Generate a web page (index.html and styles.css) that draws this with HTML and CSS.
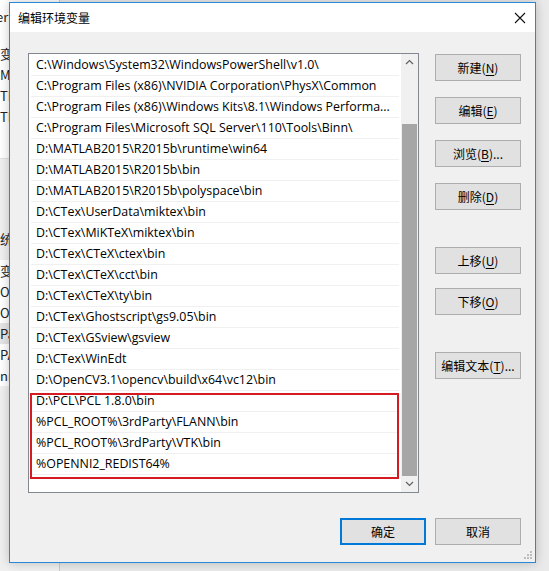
FILE: index.html
```html
<!DOCTYPE html>
<html lang="zh-CN">
<head>
<meta charset="utf-8">
<title>编辑环境变量</title>
<link rel="stylesheet" href="styles.css">
</head>
<body>
<div class="desktop">
  <div class="bgwin">
    <div class="bg-head">er</div>
    <div class="bg-list">
      <div class="bg-row">变</div>
      <div class="bg-row">M</div>
      <div class="bg-row">TE</div>
      <div class="bg-row">TM</div>
    </div>
    <div class="bg-gap"></div>
    <div class="bg-label">统</div>
    <div class="bg-list2">
      <div class="bg-row">变</div>
      <div class="bg-row">O</div>
      <div class="bg-row">O</div>
      <div class="bg-row sel">Pa</div>
      <div class="bg-row">PA</div>
      <div class="bg-row">nr</div>
    </div>
  </div>

  <div class="dialog">
    <div class="titlebar">
      <span class="title">编辑环境变量</span>
      <svg class="close" width="12" height="12" viewBox="0 0 12 12"><path d="M1 1L11 11M11 1L1 11" stroke="#111" stroke-width="1.1" fill="none"/></svg>
    </div>
    <div class="body">
      <div class="main">
        <div class="listbox">
          <div class="items">
            <div class="row">C:\Windows\System32\WindowsPowerShell\v1.0\</div>
            <div class="row">C:\Program Files (x86)\NVIDIA Corporation\PhysX\Common</div>
            <div class="row">C:\Program Files (x86)\Windows Kits\8.1\Windows Performa...</div>
            <div class="row">C:\Program Files\Microsoft SQL Server\110\Tools\Binn\</div>
            <div class="row">D:\MATLAB2015\R2015b\runtime\win64</div>
            <div class="row">D:\MATLAB2015\R2015b\bin</div>
            <div class="row">D:\MATLAB2015\R2015b\polyspace\bin</div>
            <div class="row">D:\CTex\UserData\miktex\bin</div>
            <div class="row">D:\CTex\MiKTeX\miktex\bin</div>
            <div class="row">D:\CTex\CTeX\ctex\bin</div>
            <div class="row">D:\CTex\CTeX\cct\bin</div>
            <div class="row">D:\CTex\CTeX\ty\bin</div>
            <div class="row">D:\CTex\Ghostscript\gs9.05\bin</div>
            <div class="row">D:\CTex\GSview\gsview</div>
            <div class="row">D:\CTex\WinEdt</div>
            <div class="row">D:\OpenCV3.1\opencv\build\x64\vc12\bin</div>
            <div class="row">D:\PCL\PCL 1.8.0\bin</div>
            <div class="row">%PCL_ROOT%\3rdParty\FLANN\bin</div>
            <div class="row">%PCL_ROOT%\3rdParty\VTK\bin</div>
            <div class="row">%OPENNI2_REDIST64%</div>
          </div>
          <div class="scrollbar">
            <div class="arrow">
              <svg width="9" height="6" viewBox="0 0 9 6"><path d="M1 5L4.5 1.5L8 5" stroke="#606060" stroke-width="1.2" fill="none"/></svg>
            </div>
            <div class="track"><div class="thumb"></div></div>
            <div class="arrow">
              <svg width="9" height="6" viewBox="0 0 9 6"><path d="M1 1L4.5 4.5L8 1" stroke="#606060" stroke-width="1.2" fill="none"/></svg>
            </div>
          </div>
          <div class="mark"></div>
        </div>
        <div class="btncol">
          <button class="btn">新建(<u>N</u>)</button>
          <button class="btn">编辑(<u>E</u>)</button>
          <button class="btn">浏览(<u>B</u>)...</button>
          <button class="btn">删除(<u>D</u>)</button>
          <button class="btn gap-big">上移(<u>U</u>)</button>
          <button class="btn gap-small">下移(<u>O</u>)</button>
          <button class="btn gap-big">编辑文本(<u>T</u>)...</button>
        </div>
      </div>
      <div class="footer">
        <button class="btn default">确定</button>
        <button class="btn">取消</button>
      </div>
    </div>
    <svg class="grip" width="10" height="10" viewBox="0 0 10 10">
      <rect x="7" y="1" width="2" height="2" fill="#bdbdbd"/>
      <rect x="4" y="4" width="2" height="2" fill="#bdbdbd"/>
      <rect x="7" y="4" width="2" height="2" fill="#bdbdbd"/>
      <rect x="1" y="7" width="2" height="2" fill="#bdbdbd"/>
      <rect x="4" y="7" width="2" height="2" fill="#bdbdbd"/>
      <rect x="7" y="7" width="2" height="2" fill="#bdbdbd"/>
    </svg>
  </div>
</div>
</body>
</html>
```
FILE: styles.css
```css
* { box-sizing: border-box; }
html, body { margin: 0; padding: 0; }
body {
  font-family: "Open Sans", "Noto Sans CJK SC", sans-serif;
  font-size: 12px;
  color: #000;
}
.desktop {
  position: relative;
  width: 549px;
  height: 571px;
  background: #eaeaea;
  overflow: hidden;
}

/* background window, partially hidden */
.bgwin {
  position: absolute;
  left: 0;
  top: 0;
  width: 60px;
  height: 571px;
  background: #f0f0f0;
  border-right: 1px solid #ccc;
  font-family: "Noto Sans CJK SC", sans-serif;
  font-size: 13px;
  color: #222;
}
.bg-head {
  height: 33px;
  background: #fff;
  line-height: 33px;
  margin-left: -4px;
}
.bg-list {
  padding-top: 10px;
  background: #fff;
  height: 125px;
}
.bg-row { height: 21px; line-height: 21px; }
.bg-gap { height: 70px; border-top: 1px solid #e0e0e0; }
.bg-label { height: 32px; line-height: 22px; }
.bg-list2 { background: #fff; }
.bg-row.sel { background: #e5e5e5; }

/* dialog */
.dialog {
  position: absolute;
  left: 9px;
  top: 2px;
  width: 527px;
  height: 561px;
  border: 1px solid #2a87d8;
  background: #f0f0f0;
  box-shadow: 0 0 10px rgba(0, 0, 0, 0.22);
  display: flex;
  flex-direction: column;
}
.titlebar {
  height: 29px;
  background: #fff;
  display: flex;
  align-items: center;
  justify-content: space-between;
  padding: 0 9px 0 8px;
  flex: none;
}
.title {
  font-family: "Noto Sans CJK SC", sans-serif;
  font-size: 12px;
  color: #000;
}
.close { display: block; }

.body {
  padding: 21px 14px 0 18px;
  display: flex;
  flex-direction: column;
}
.main {
  display: flex;
  gap: 16px;
}
.listbox {
  position: relative;
  width: 391px;
  height: 440px;
  background: #fff;
  border: 1px solid #828790;
  display: flex;
  padding-top: 1px;
}
.items {
  flex: 1;
  padding: 0 2px;
  min-width: 0;
}
.row {
  height: 21px;
  line-height: 20px;
  padding-left: 5px;
  border-bottom: 1px solid #f0f0f0;
  white-space: nowrap;
  overflow: hidden;
  color: #000;
  font-size: 12.4px;
}
.scrollbar {
  width: 17px;
  flex: none;
  margin-top: -1px;
  background: #f0f0f0;
  display: flex;
  flex-direction: column;
}
.arrow {
  height: 17px;
  display: flex;
  align-items: center;
  justify-content: center;
}
.arrow svg { display: block; }
.track {
  flex: 1;
  padding: 53px 1px 0 1px;
}
.thumb {
  height: 352px;
  background: #a6a6a6;
}
.mark {
  position: absolute;
  left: 1px;
  top: 339px;
  width: 369px;
  height: 86px;
  border: 2px solid #d61a22;
}

.btncol {
  display: flex;
  flex-direction: column;
  gap: 16px;
  padding-top: 1px;
}
.btn {
  width: 86px;
  height: 27px;
  background: #e1e1e1;
  border: 1px solid #adadad;
  font-family: "Noto Sans CJK SC", sans-serif;
  font-size: 12px;
  color: #000;
  padding: 0;
  margin: 0;
  display: flex;
  align-items: center;
  justify-content: center;
}
.btn u { text-underline-offset: 2px; }
.btn.gap-big { margin-top: 21px; }
.btn.gap-small { margin-top: -2px; }

.footer {
  margin-top: 25px;
  display: flex;
  justify-content: flex-end;
  gap: 9px;
}
.btn.default { border: 2px solid #0078d7; }

.grip {
  position: absolute;
  right: 2px;
  bottom: 2px;
}
```
